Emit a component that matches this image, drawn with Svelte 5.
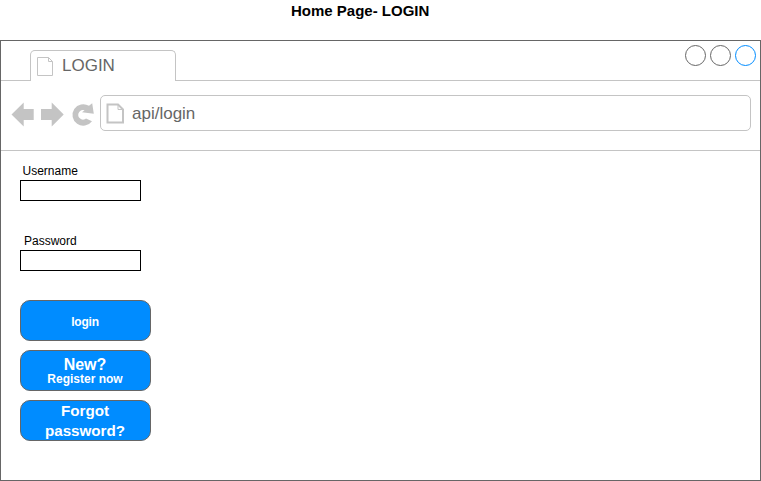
<script>
  const fields = [
    { id: 'username', label: 'Username', type: 'text', indent: 2.5 },
    { id: 'password', label: 'Password', type: 'password', indent: 4 }
  ];
</script>

<main>
  <h1>Home Page- LOGIN</h1>
  <section class="window">
    <header class="tabs">
      <div class="lead"></div>
      <div class="tab">
        <svg width="17" height="20" viewBox="0 0 17 20" fill="none" stroke="#c4c4c4">
          <path d="M.5 .5H11.5L15.5 4.5V18.5H.5ZM11.5 .5V4.5H15.5" />
        </svg>
        <span>LOGIN</span>
      </div>
      <div class="controls">
        <i></i><i></i><i class="blue"></i>
      </div>
    </header>

    <nav class="toolbar">
      <svg class="nav" width="99" height="36" viewBox="0 0 99 36" fill="#c4c4c4">
        <path d="M10.5 19.5L22.7 7.5V14H32.7V25H22.7V31.5Z" />
        <path d="M62.7 19.5L50.7 7.5V14H40V25H50.7V31.5Z" />
        <path d="M91.2 8.2L92.8 18.8L81 17.3L83.6 15.3A4.8 4.8 0 1 0 85 23.6L91 26.3A10.8 10.8 0 1 1 88 10.8Z" />
      </svg>
      <div class="address">
        <svg width="19" height="22" viewBox="0 0 19 22" fill="none" stroke="#c4c4c4">
          <path d="M1.5 1.5H12L17 6.5V19.5H1.5Z" stroke-width="2" />
          <path d="M12 1.5V6.5H17" />
        </svg>
        <span>api/login</span>
      </div>
    </nav>

    <form class="body" onsubmit={(e) => e.preventDefault()}>
      {#each fields as f}
        <div class="field">
          <label for={f.id} style="padding-left: {f.indent}px">{f.label}</label>
          <input id={f.id} type={f.type} />
        </div>
      {/each}
      <button class="small"><span>login</span></button>
      <button class="register" type="button"><b>New?</b><span>Register now</span></button>
      <button class="forgot" type="button"><b>Forgot<br />password?</b></button>
    </form>
  </section>
</main>

<style>
  :global(body) { background: #fff; overflow: hidden; }
  main {
    width: 761px;
    height: 481px;
    display: flex;
    flex-direction: column;
    font-family: "Liberation Sans", Arial, sans-serif;
  }
  * { box-sizing: border-box; }
  svg { display: block; flex: none; }
  h1 {
    margin: 0;
    height: 40px;
    padding: 2px 0 0 291px;
    font-size: 15px;
    line-height: 18px;
    white-space: nowrap;
    color: #000;
  }
  .window {
    height: 441px;
    border: 1px solid #666;
    display: flex;
    flex-direction: column;
  }
  .tabs { display: flex; height: 40px; }
  .lead { width: 29px; border-bottom: 1px solid #c4c4c4; }
  .tab {
    width: 146px;
    height: 31px;
    margin-top: 9px;
    padding: 6px 0 0 6px;
    display: flex;
    border: 1px solid #c4c4c4;
    border-bottom: 0;
    border-radius: 5px 5px 0 0;
  }
  .tab span {
    margin-left: 8px;
    margin-top: -1px;
    font-size: 17px;
    line-height: 20px;
    color: #666;
  }
  .controls {
    flex: 1;
    display: flex;
    justify-content: flex-end;
    gap: 4px;
    padding: 4px 4px 0 0;
    border-bottom: 1px solid #c4c4c4;
  }
  .controls i {
    width: 21px;
    height: 21px;
    border: 1px solid #666;
    border-radius: 50%;
  }
  .controls .blue { border-color: #008cff; }
  .toolbar {
    height: 70px;
    padding-top: 14px;
    display: flex;
    border-bottom: 1px solid #c4c4c4;
  }
  .address {
    width: 651px;
    height: 36px;
    padding: 7px 0 0 5px;
    display: flex;
    border: 1px solid #c4c4c4;
    border-radius: 5px;
  }
  .address span {
    margin-left: 7px;
    margin-top: 1px;
    font-size: 17px;
    line-height: 20px;
    color: #666;
  }
  .body {
    padding: 12px 0 0 19px;
    display: flex;
    flex-direction: column;
    align-items: flex-start;
  }
  .field {
    height: 70px;
    display: flex;
    flex-direction: column;
  }
  label {
    height: 17px;
    font-size: 12px;
    line-height: 16px;
    color: #000;
  }
  input {
    width: 121px;
    height: 21px;
    padding: 0 3px;
    border: 1px solid #000;
    border-radius: 0;
    background: #fff;
    outline: 0;
  }
  button {
    width: 131px;
    height: 41px;
    margin: 0 0 9px;
    padding: 0;
    display: flex;
    flex-direction: column;
    align-items: center;
    justify-content: center;
    border: 1px solid #666;
    border-radius: 10px;
    background: #008cff;
    color: #fff;
    font-family: inherit;
    font-size: 12px;
    font-weight: bold;
    line-height: 14px;
  }
  .small { margin-top: -3px; }
  .small span { padding-top: 2px; letter-spacing: -0.2px; }
  b { font-size: 16px; line-height: 14px; }
  .register { padding: 2px 1px 0 0; }
  .small, .forgot { padding-right: 1px; }
  .forgot b { font-size: 15.2px; line-height: 20px; }
</style>
